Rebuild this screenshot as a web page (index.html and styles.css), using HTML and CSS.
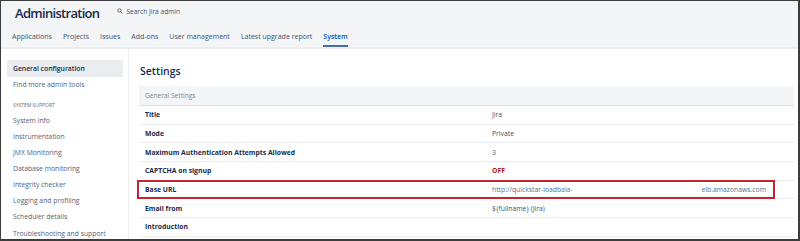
FILE: index.html
```html
<!DOCTYPE html>
<html>
<head>
<meta charset="utf-8">
<link rel="stylesheet" href="styles.css">
</head>
<body>
<div class="frame">
  <header class="header">
    <div class="title-row">
      <h1 class="title">Administration</h1>
      <div class="search">
        <svg class="search-icon" viewBox="0 0 10 10" width="6" height="6"><circle cx="4" cy="4" r="2.8" fill="none" stroke="#42526e" stroke-width="1.3"/><line x1="6" y1="6" x2="9" y2="9" stroke="#42526e" stroke-width="1.4"/></svg>
        <span>Search Jira admin</span>
      </div>
    </div>
    <nav class="tabs">
      <span class="tab">Applications</span>
      <span class="tab">Projects</span>
      <span class="tab">Issues</span>
      <span class="tab">Add-ons</span>
      <span class="tab">User management</span>
      <span class="tab">Latest upgrade report</span>
      <span class="tab active">System</span>
    </nav>
  </header>
  <div class="body">
    <aside class="sidebar">
      <div class="side-item selected">General configuration</div>
      <div class="side-item">Find more admin tools</div>
      <div class="side-heading">SYSTEM SUPPORT</div>
      <div class="side-item">System info</div>
      <div class="side-item">Instrumentation</div>
      <div class="side-item">JMX Monitoring</div>
      <div class="side-item">Database monitoring</div>
      <div class="side-item">Integrity checker</div>
      <div class="side-item">Logging and profiling</div>
      <div class="side-item">Scheduler details</div>
      <div class="side-item wrap">Troubleshooting and support tools</div>
    </aside>
    <main class="main">
      <h2 class="page-title">Settings</h2>
      <div class="table">
        <div class="table-head">General Settings</div>
        <div class="row"><div class="label">Title</div><div class="value">Jira</div></div>
        <div class="row"><div class="label">Mode</div><div class="value">Private</div></div>
        <div class="row"><div class="label">Maximum Authentication Attempts Allowed</div><div class="value">3</div></div>
        <div class="row"><div class="label">CAPTCHA on signup</div><div class="value off">OFF</div></div>
        <div class="row highlighted"><div class="label">Base URL</div><div class="value url"><span>http://quickstar-loadbala-</span><span class="url-end">elb.amazonaws.com</span></div></div>
        <div class="row"><div class="label">Email from</div><div class="value">${fullname} (Jira)</div></div>
        <div class="row"><div class="label">Introduction</div><div class="value"></div></div>
      </div>
    </main>
  </div>
</div>
</body>
</html>
```

FILE: styles.css
```css
html, body {
  margin: 0;
  padding: 0;
  background: #ffffff;
}

body {
  font-family: "Open Sans", "Noto Sans", sans-serif;
  color: #172b4d;
}

.frame {
  width: 800px;
  height: 241px;
  box-sizing: border-box;
  border: 1px solid #3c3c3c;
  border-right-width: 2px;
  border-bottom-width: 2px;
  overflow: hidden;
  display: flex;
  flex-direction: column;
  background: #fff;
}

.header {
  background: #f4f5f7;
  border-bottom: 2px solid #ebecf0;
  height: 46px;
  display: flex;
  flex-direction: column;
  flex: none;
}

.title-row {
  height: 23px;
  display: flex;
  align-items: center;
  padding-left: 14px;
}

.title {
  margin: 0;
  font-size: 13px;
  font-weight: 600;
  color: #172b4d;
  letter-spacing: -0.7px;
}

.search {
  margin-left: 18px;
  display: flex;
  align-items: center;
  gap: 3px;
  font-size: 6.6px;
  color: #42526e;
  margin-top: -3px;
}

.search-icon {
  display: block;
}

.tabs {
  flex: 1;
  display: flex;
  align-items: stretch;
  padding-left: 11px;
  gap: 11px;
}

.tab {
  font-size: 7px;
  color: #42526e;
  display: flex;
  align-items: center;
  padding-top: 3px;
  border-bottom: 2px solid transparent;
}

.tab.active {
  color: #0052cc;
  font-weight: 600;
  border-bottom-color: #4a6fa5;
}

.body {
  flex: 1;
  display: flex;
  min-height: 0;
}

.sidebar {
  flex: none;
  border-right: 1px solid #ebecf0;
  padding: 11px 5px 0 6px;
  box-sizing: border-box;
  width: 128px;
}

.side-item {
  height: 16px;
  line-height: 16px;
  font-size: 6.8px;
  color: #505f79;
  padding-left: 6px;
  white-space: nowrap;
}

.side-item.selected {
  height: 17px;
  line-height: 17px;
  background: #ebecf0;
  color: #172b4d;
  font-weight: 600;
}

.side-item.wrap {
  white-space: normal;
  height: auto;
  line-height: 9px;
  padding-top: 4px;
  padding-right: 14px;
}

.side-heading {
  font-size: 5px;
  color: #5e6c84;
  padding-left: 6px;
  height: 20px;
  line-height: 12px;
  padding-top: 6px;
  box-sizing: border-box;
}

.main {
  flex: 1;
  padding: 0 4px 0 10px;
  min-width: 0;
}

.page-title {
  margin: 14px 0 7px 1px;
  height: 16px;
  line-height: 16px;
  font-size: 10.5px;
  font-weight: 600;
  color: #172b4d;
}

.table {
  display: flex;
  flex-direction: column;
}

.table-head {
  height: 19px;
  line-height: 19px;
  background: #f4f5f7;
  border-bottom: 1px solid #dfe1e6;
  font-size: 6.6px;
  color: #7a869a;
  padding-left: 6px;
}

.row {
  display: grid;
  grid-template-columns: 347px 1fr;
  height: 17.67px;
  border-bottom: 1px solid #ebecf0;
  align-items: center;
  position: relative;
}

.label {
  padding-left: 6px;
  font-size: 6.8px;
  font-weight: 700;
  color: #172b4d;
  white-space: nowrap;
}

.value {
  padding-left: 6px;
  font-size: 6.8px;
  color: #42526e;
  white-space: nowrap;
}

.value.off {
  color: #a61c1c;
  font-weight: 700;
}

.value.url {
  display: flex;
  color: #55708f;
}

.url-end {
  margin-left: auto;
  margin-right: 28px;
}

.row.highlighted::after {
  content: "";
  position: absolute;
  left: -2px;
  right: 19px;
  top: -1px;
  bottom: -1px;
  border: 2px solid #c3262e;
  pointer-events: none;
}
```
